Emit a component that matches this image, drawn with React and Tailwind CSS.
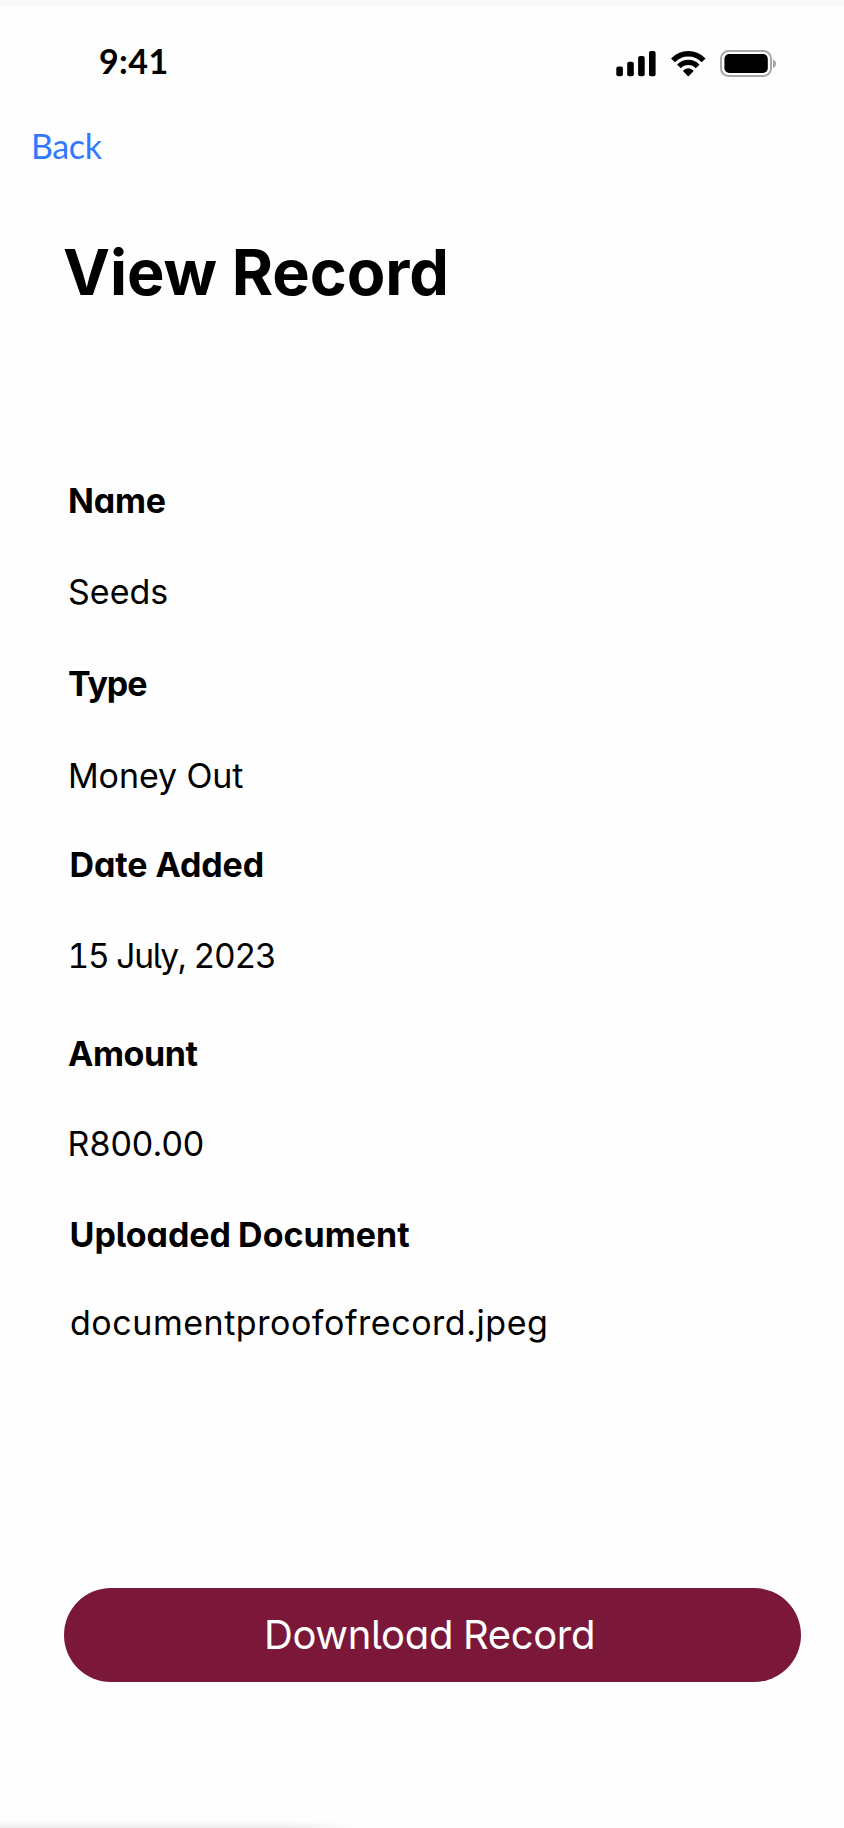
const fields = [
  { label: 'Name', value: 'Seeds', box: 'pt-[100px]', labelCls: 'ml-[68px] tracking-[-0.2px]', valueCls: 'mt-[51px] ml-[68px] text-[34px]' },
  { label: 'Type', value: 'Money Out', box: 'pt-[52px]', labelCls: 'ml-[68px] tracking-[-1.1px]', valueCls: 'mt-[52px] ml-[68px] text-[34px] tracking-[-0.1px]' },
  { label: 'Date Added', value: '15 July, 2023', box: 'pt-[49px]', labelCls: 'ml-[69.5px] tracking-[-0.1px]', valueCls: "mt-[51px] ml-[67.5px] text-[33.5px] tracking-[-1.2px] [font-feature-settings:'cv11','cv05','tnum']" },
  { label: 'Amount', value: 'R800.00', box: 'pt-[58px]', labelCls: 'ml-[68px] tracking-[-0.4px]', valueCls: 'mt-[50px] ml-[67.5px] text-[34px]' },
  { label: 'Uploaded Document', value: 'documentproofofrecord.jpeg', box: 'pt-[51px]', labelCls: 'ml-[69.5px] [word-spacing:-1px]', valueCls: 'mt-[48px] ml-[70px] text-[34px] tracking-[0.54px]' },
];

function StatusIcons() {
  return (
    <svg className="h-[30px] w-[164px]" viewBox="614 48 164 30" fill="none" aria-hidden="true">
      <g fill="#000">
        <rect x="616.3" y="66.5" width="6.6" height="9.7" rx="2" />
        <rect x="627.2" y="61.7" width="6.6" height="14.5" rx="2" />
        <rect x="638.1" y="56" width="6.6" height="20.2" rx="2" />
        <rect x="649" y="51" width="6.6" height="25.2" rx="2" />
      </g>
      <path d="M673 60.4A20.8 20.8 0 0 1 703.6 60.4" stroke="#000" strokeWidth="5.4" />
      <path d="M679 66.4A12.6 12.6 0 0 1 697.6 66.4" stroke="#000" strokeWidth="5.2" />
      <path d="M683.4 71.6Q682.8 71 683.5 70.3Q688.3 66.2 693.1 70.3Q693.8 71 693.2 71.6L688.9 76Q688.3 76.6 687.7 76Z" fill="#000" />
      <rect x="721" y="51" width="50" height="25" rx="7.5" stroke="#a8a8a8" strokeWidth="2" />
      <rect x="724.4" y="54" width="43.4" height="19" rx="4.8" fill="#000" />
      <path d="M773 59.4C777.2 61 777.2 66.4 773 68Z" fill="#a8a8a8" />
    </svg>
  );
}

export default function App() {
  return (
    <main className="flex h-[1828px] w-[844px] flex-col overflow-hidden bg-[#fefefe] font-['Inter',sans-serif] text-black [font-feature-settings:'cv11','cv05']">
      <div className="h-[7px] shrink-0 bg-[#f8f9fb]" />
      <header className="flex h-[119px] shrink-0 items-start justify-between pr-[66px] pl-[99px]">
        <time className="mt-[34px] font-['Lato',sans-serif] text-[34px] leading-[40px] font-bold tracking-[0.4px]">9:41</time>
        <div className="mt-[41px] flex">
          <StatusIcons />
        </div>
      </header>
      <a href="#" className="ml-[31px] self-start font-['Lato',sans-serif] text-[34px] leading-[40px] tracking-[-0.4px] text-[#3079ff]">Back</a>
      <h1 className="mt-[70px] ml-[63px] text-[63px] leading-[72px] font-bold tracking-[-0.1px]">View Record</h1>
      <dl className="mt-[73px] flex flex-col text-[34px] leading-[40px]">
        {fields.map((f) => (
          <div key={f.label} className={f.box}>
            <dt className={`font-bold ${f.labelCls}`}>{f.label}</dt>
            <dd className={f.valueCls}>{f.value}</dd>
          </div>
        ))}
      </dl>
      <button className="mt-[245px] ml-[64px] flex h-[93.5px] w-[737px] shrink-0 items-center justify-center rounded-full bg-[#7b183a] pr-[6px] text-[40px] leading-[48px] tracking-[-0.35px] [word-spacing:-1px] text-white">
        Download Record
      </button>
      <div className="mt-auto h-[7px] w-[360px] shrink-0 bg-linear-to-b from-transparent to-[#ececec] [mask-image:linear-gradient(to_right,black_80%,transparent)]" />
    </main>
  );
}
